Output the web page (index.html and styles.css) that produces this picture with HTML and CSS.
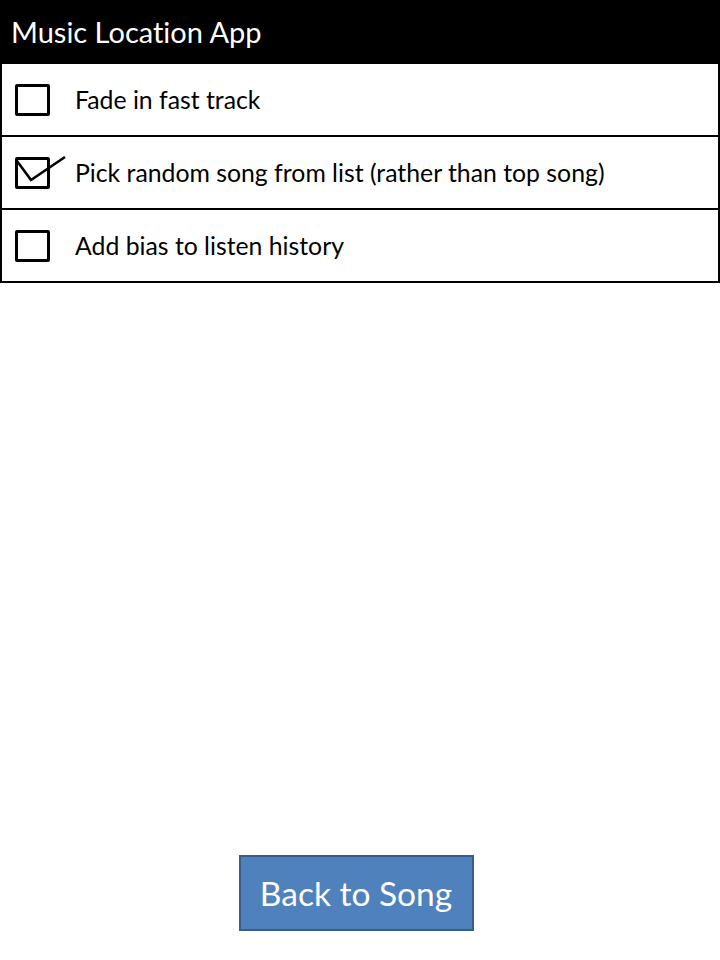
FILE: index.html
```html
<!DOCTYPE html>
<html>
<head>
<meta charset="utf-8">
<link rel="stylesheet" href="styles.css">
</head>
<body>
<div class="app">
  <header class="titlebar">Music Location App</header>
  <ul class="options">
    <li class="option">
      <span class="box"></span>
      <span class="label">Fade in fast track</span>
    </li>
    <li class="option">
      <span class="box">
        <svg class="tick" width="52" height="32" viewBox="0 0 52 32"><polyline points="2,4 16,23 50,0" fill="none" stroke="#000" stroke-width="2.6" stroke-linejoin="miter"/></svg>
      </span>
      <span class="label">Pick random song from list (rather than top song)</span>
    </li>
    <li class="option">
      <span class="box"></span>
      <span class="label">Add bias to listen history</span>
    </li>
  </ul>
  <div class="spacer"></div>
  <div class="actions">
    <button class="back">Back to Song</button>
  </div>
</div>
</body>
</html>
```
FILE: styles.css
```css
html, body {
  margin: 0;
  padding: 0;
  background: #fff;
}
body {
  font-family: Lato, "Open Sans", sans-serif;
  font-variant-ligatures: none;
  width: 720px;
  height: 960px;
}
.app {
  display: flex;
  flex-direction: column;
  height: 960px;
}
.titlebar {
  background: #000;
  color: #fff;
  height: 64px;
  box-sizing: border-box;
  padding: 0 0 2px 11px;
  display: flex;
  align-items: center;
  font-size: 29px;
}
.options {
  list-style: none;
  margin: 0;
  padding: 0;
}
.option {
  height: 73px;
  box-sizing: border-box;
  border-left: 2px solid #000;
  border-right: 2px solid #000;
  border-bottom: 2px solid #000;
  display: flex;
  align-items: center;
  padding-left: 13px;
}
.box {
  position: relative;
  width: 35px;
  height: 32px;
  box-sizing: border-box;
  border: 3px solid #000;
  border-radius: 2px;
  flex: none;
  margin-right: 25px;
}
.tick {
  position: absolute;
  left: -3px;
  top: -3px;
  overflow: visible;
}
.label {
  font-size: 24.8px;
  color: #000;
}
.spacer {
  flex: 1;
}
.actions {
  display: flex;
  justify-content: center;
  padding-bottom: 29px;
}
.back {
  width: 235px;
  height: 76px;
  margin-right: 8px;
  background: #4f81bd;
  border: 2px solid #385d8a;
  color: #fff;
  font-family: Lato, "Open Sans", sans-serif;
  font-size: 33.5px;
  padding: 0;
}
```
